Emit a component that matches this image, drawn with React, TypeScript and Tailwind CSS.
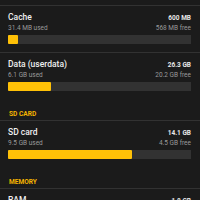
import React from "react";

type Usage = { title: string; total: string; used: string; free: string; pct: number };

const STORAGE: Usage[] = [
  { title: "Cache", total: "600 MB", used: "31.4 MB used", free: "568 MB free", pct: 5.6 },
  { title: "Data (userdata)", total: "26.3 GB", used: "6.1 GB used", free: "20.2 GB free", pct: 23.5 },
];

const SDCARD: Usage = { title: "SD card", total: "14.1 GB", used: "9.5 GB used", free: "4.5 GB free", pct: 68 };

function UsageRow({ item, border }: { item: Usage; border?: boolean }) {
  return (
    <div className={`pl-[8px] pr-[9px] pt-[5px] pb-[8px] ${border ? "border-t border-[#323232]" : ""}`}>
      <div className="flex items-baseline justify-between leading-[12px]">
        <span className="text-[8.5px] font-medium text-[#f0f0f0]">{item.title}</span>
        <span className="text-[6.5px] font-bold text-[#e8e8e8]">{item.total}</span>
      </div>
      <div className="flex items-baseline justify-between text-[6.5px] leading-[9px] text-[#9a9a9a]">
        <span>{item.used}</span>
        <span>{item.free}</span>
      </div>
      <div className="mt-[2px] h-[9px] bg-[#323232]">
        <div className="h-full rounded-[1px] bg-[#ffc107]" style={{ width: `${item.pct}%` }} />
      </div>
    </div>
  );
}

function SectionHeader({ label }: { label: string }) {
  return (
    <div className="pl-[9px] pt-[10.5px] pb-[2.5px] text-[6.6px] font-bold leading-[8px] text-[#f5b400]">
      {label}
    </div>
  );
}

export default function App() {
  return (
    <div
      className="h-[200px] w-[200px] overflow-hidden bg-[#1b1b1b]"
      style={{ fontFamily: "Roboto, 'Noto Sans', sans-serif" }}
    >
      <div className="h-[5px]" />
      {STORAGE.map((item) => (
        <UsageRow key={item.title} item={item} border />
      ))}
      <SectionHeader label="SD CARD" />
      <UsageRow item={SDCARD} border />
      <SectionHeader label="MEMORY" />
      <div className="border-t border-[#323232] pl-[8px] pr-[9px] pt-[5px]">
        <div className="flex items-baseline justify-between leading-[12px]">
          <span className="text-[8.5px] font-medium text-[#f0f0f0]">RAM</span>
          <span className="text-[6.5px] font-bold text-[#e8e8e8]">1.8 GB</span>
        </div>
      </div>
    </div>
  );
}
